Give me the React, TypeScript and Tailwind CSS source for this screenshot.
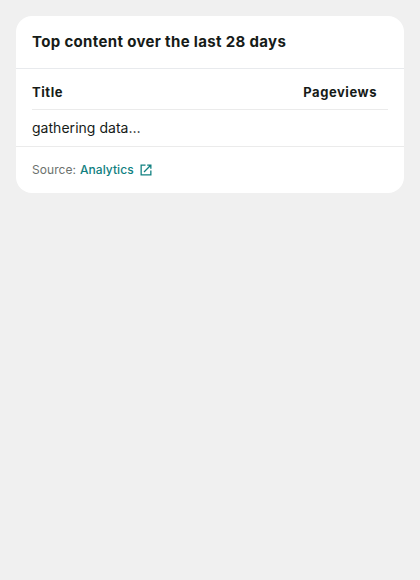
import React from 'react';

function ExternalLinkIcon() {
  return (
    <svg width="12" height="12" viewBox="0 0 12 12" fill="none" stroke="currentColor" strokeWidth="1.3" aria-hidden="true">
      <path d="M5.5 1.15H1.15V10.85H10.85V6.5" />
      <path d="M7.2 1.15H10.85V4.8M10.7 1.3L4 8" />
    </svg>
  );
}

export default function App() {
  return (
    <main className="min-h-screen bg-[#f0f0f0] p-4 font-['Inter','Liberation_Sans',sans-serif] text-[#161b18]">
      <section className="h-[177px] overflow-hidden rounded-2xl bg-white">
        <header className="flex h-[53px] items-center border-b border-[#e8eaed] px-4">
          <h3 className="text-[15px] leading-6 font-bold tracking-[0.34px]">Top content over the last 28 days</h3>
        </header>
        <div className="flex h-[77px] flex-col px-4 text-sm leading-5">
          <div className="flex h-[41px] items-end justify-between border-b border-[#ebebeb] pr-[11px] pb-[7px] text-[13px] font-bold tracking-[0.55px]">
            <span>Title</span>
            <span>Pageviews</span>
          </div>
          <div className="flex h-9 items-center text-[14px] tracking-[0.03px]">gathering data…</div>
        </div>
        <footer className="flex h-[47px] items-center border-t border-[#ebebeb] px-4 text-xs leading-4 tracking-[0.05px]">
          <span className="mr-1 text-[#6c726e]">Source:</span>
          <a href="#analytics" className="flex items-center gap-1.5 font-medium text-[#108080]">
            <span>Analytics</span>
            <ExternalLinkIcon />
          </a>
        </footer>
      </section>
    </main>
  );
}
